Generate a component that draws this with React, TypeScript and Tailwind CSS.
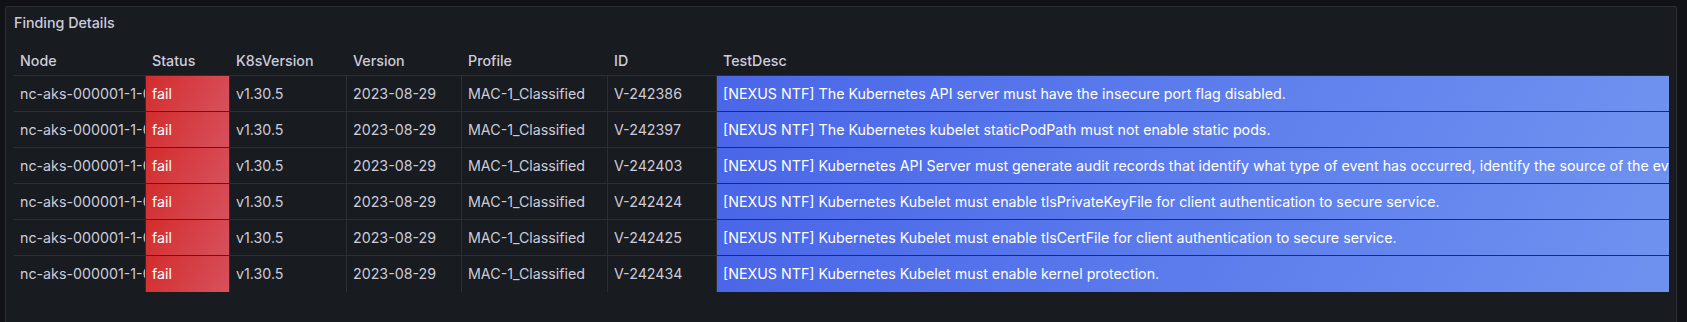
import React from 'react';

interface Finding {
  node: string;
  status: string;
  k8sVersion: string;
  version: string;
  profile: string;
  id: string;
  testDesc: string;
}

const findings: Finding[] = [
  { node: 'nc-aks-000001-1-0', status: 'fail', k8sVersion: 'v1.30.5', version: '2023-08-29', profile: 'MAC-1_Classified', id: 'V-242386', testDesc: '[NEXUS NTF] The Kubernetes API server must have the insecure port flag disabled.' },
  { node: 'nc-aks-000001-1-0', status: 'fail', k8sVersion: 'v1.30.5', version: '2023-08-29', profile: 'MAC-1_Classified', id: 'V-242397', testDesc: '[NEXUS NTF] The Kubernetes kubelet staticPodPath must not enable static pods.' },
  { node: 'nc-aks-000001-1-0', status: 'fail', k8sVersion: 'v1.30.5', version: '2023-08-29', profile: 'MAC-1_Classified', id: 'V-242403', testDesc: '[NEXUS NTF] Kubernetes API Server must generate audit records that identify what type of event has occurred, identify the source of the event, contain the event results, identify any users, and identify any containers associated with the event.' },
  { node: 'nc-aks-000001-1-0', status: 'fail', k8sVersion: 'v1.30.5', version: '2023-08-29', profile: 'MAC-1_Classified', id: 'V-242424', testDesc: '[NEXUS NTF] Kubernetes Kubelet must enable tlsPrivateKeyFile for client authentication to secure service.' },
  { node: 'nc-aks-000001-1-0', status: 'fail', k8sVersion: 'v1.30.5', version: '2023-08-29', profile: 'MAC-1_Classified', id: 'V-242425', testDesc: '[NEXUS NTF] Kubernetes Kubelet must enable tlsCertFile for client authentication to secure service.' },
  { node: 'nc-aks-000001-1-0', status: 'fail', k8sVersion: 'v1.30.5', version: '2023-08-29', profile: 'MAC-1_Classified', id: 'V-242434', testDesc: '[NEXUS NTF] Kubernetes Kubelet must enable kernel protection.' },
];

const headers = ['Node', 'Status', 'K8sVersion', 'Version', 'Profile', 'ID', 'TestDesc'];

const gridCols = 'grid grid-cols-[132px_84px_117px_115px_146px_109px_1fr]';
const cell = 'flex items-center overflow-hidden whitespace-nowrap px-[6px] border-r border-[#2c2e33]';

export default function App() {
  return (
    <div
      className="h-[322px] w-[1687px] overflow-hidden bg-[#111217] pl-[5px] pt-[6px] pr-[10px] text-[14.25px] text-[#ccccdc]"
      style={{ fontFamily: 'Inter, "Noto Sans", sans-serif' }}
    >
      <div className="h-[340px] rounded-[2px] border border-[#2c2e33] bg-[#181b1f]">
        {/* panel header */}
        <div className="flex h-[32px] items-center px-[8px] font-medium">Finding Details</div>

        {/* table */}
        <div className="ml-[8px] mr-[7px]">
          <div className={`${gridCols} h-[37px] border-b border-[#2c2e33] font-medium`}>
            {headers.map((h) => (
              <div key={h} className="flex items-center px-[6px] pt-[8px]">
                {h}
              </div>
            ))}
          </div>

          {findings.map((f, i) => {
            const last = i === findings.length - 1;
            const rowBorder = last ? '' : 'border-b';
            return (
              <div key={f.id} className={`${gridCols} h-[36px]`}>
                <div className={`${cell} ${rowBorder}`}>{f.node}</div>
                <div className={`${cell} ${rowBorder} bg-[linear-gradient(120deg,#d32c2c,#d7515d)] text-white`}>
                  {f.status}
                </div>
                <div className={`${cell} ${rowBorder}`}>{f.k8sVersion}</div>
                <div className={`${cell} ${rowBorder}`}>{f.version}</div>
                <div className={`${cell} ${rowBorder}`}>{f.profile}</div>
                <div className={`${cell} ${rowBorder}`}>{f.id}</div>
                <div
                  className={`flex items-center overflow-hidden whitespace-nowrap px-[6px] ${rowBorder} border-[#2c2e33] bg-[linear-gradient(120deg,#4a66e8,#6f92f0)] text-white`}
                >
                  {f.testDesc}
                </div>
              </div>
            );
          })}
        </div>
      </div>
    </div>
  );
}
